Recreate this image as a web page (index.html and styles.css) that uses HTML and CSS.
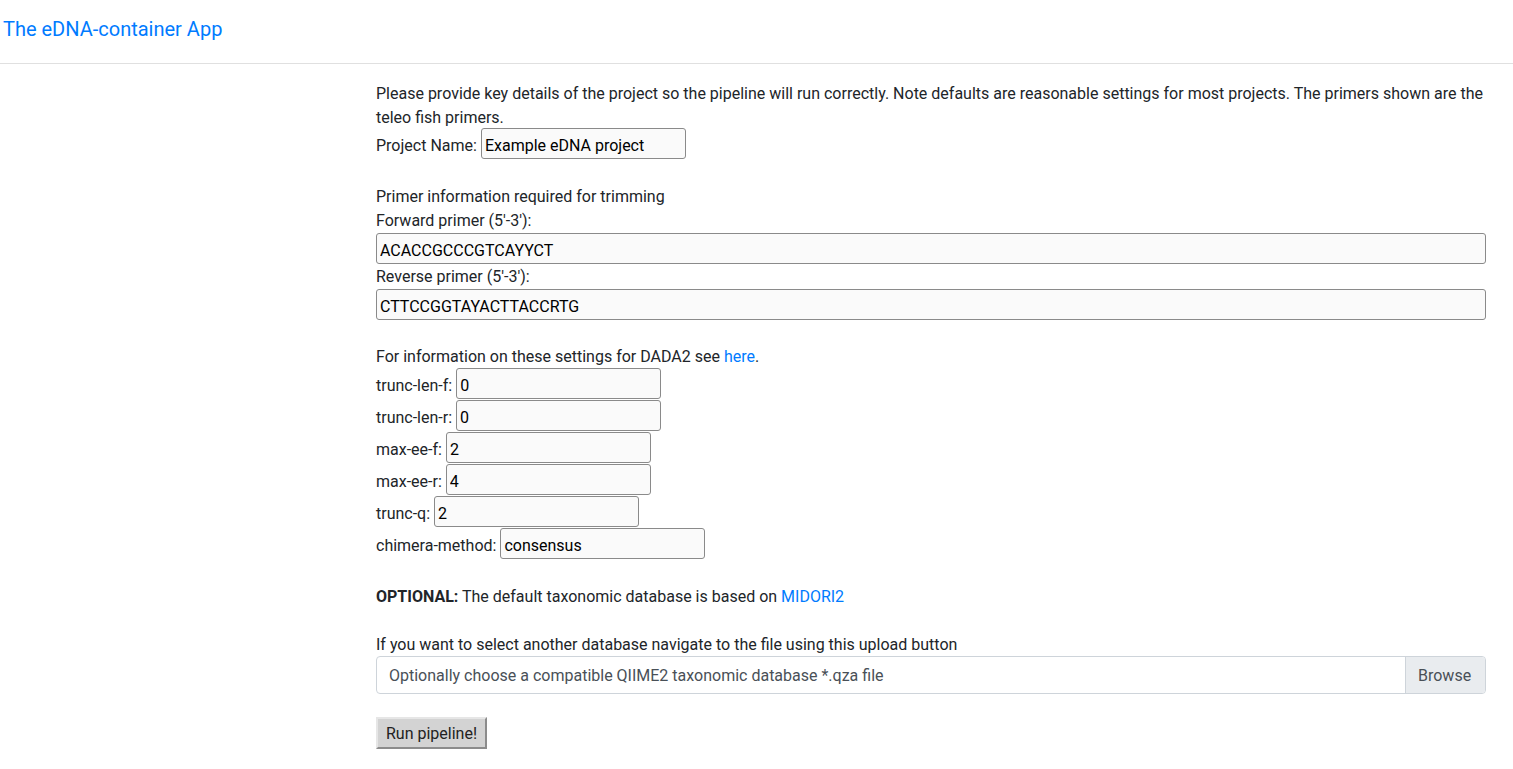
FILE: index.html
```html
<!DOCTYPE html>
<html lang="en">
<head>
<meta charset="utf-8">
<title>The eDNA-container App</title>
<link rel="stylesheet" href="styles.css">
</head>
<body>
<nav class="navbar"><a class="brand" href="#">The eDNA-container App</a></nav>
<main class="main">
  <p class="intro">Please provide key details of the project so the pipeline will run correctly. Note defaults are reasonable settings for most projects. The primers shown are the teleo fish primers.</p>
  <div class="row row-first"><label>Project Name:</label><input class="field" type="text" value="Example eDNA project"></div>

  <p class="section">Primer information required for trimming</p>
  <p class="line">Forward primer (5'-3'):</p>
  <input class="field wide" type="text" value="ACACCGCCCGTCAYYCT">
  <p class="line after-input">Reverse primer (5'-3'):</p>
  <input class="field wide" type="text" value="CTTCCGGTAYACTTACCRTG">

  <p class="section">For information on these settings for DADA2 see <a href="#">here</a>.</p>
  <div class="row row-next"><label>trunc-len-f:</label><input class="field" type="text" value="0"></div>
  <div class="row"><label>trunc-len-r:</label><input class="field" type="text" value="0"></div>
  <div class="row"><label>max-ee-f:</label><input class="field" type="text" value="2"></div>
  <div class="row"><label>max-ee-r:</label><input class="field" type="text" value="4"></div>
  <div class="row"><label>trunc-q:</label><input class="field" type="text" value="2"></div>
  <div class="row"><label>chimera-method:</label><input class="field" type="text" value="consensus"></div>

  <p class="section"><strong>OPTIONAL:</strong> The default taxonomic database is based on <a href="#">MIDORI2</a></p>
  <p class="section2">If you want to select another database navigate to the file using this upload button</p>
  <div class="custom-file">
    <span class="file-label">Optionally choose a compatible QIIME2 taxonomic database *.qza file</span>
    <span class="browse">Browse</span>
  </div>
  <button class="run" type="button">Run pipeline!</button>
</main>
</body>
</html>
```
FILE: styles.css
```css
* { box-sizing: border-box; }
html, body { margin: 0; padding: 0; }
body {
  font-family: Roboto, "Liberation Sans", sans-serif;
  font-size: 16px;
  line-height: 24px;
  color: #212529;
  background: #fff;
}
a { color: #007bff; text-decoration: none; }
.navbar {
  height: 64px;
  padding: 14px 3px 0;
  border-bottom: 1px solid #e0e0e0;
}
.brand {
  font-size: 20px;
  line-height: 30px;
  color: #007bff;
}
.main {
  padding: 18px 27px 0 376px;
}
p { margin: 0; }
.intro { margin: 0; }
.row {
  display: flex;
  align-items: baseline;
  height: 32px;
  gap: 4px;
}
.row-first { margin-top: -2px; }
.row-next { margin-top: -1px; }
.field {
  font-family: Roboto, "Liberation Sans", sans-serif;
  font-size: 16px;
  color: #000;
  width: 205px;
  height: 31px;
  padding: 4px 3px 0;
  border: 1px solid #8a8a8a;
  border-radius: 3px;
  background: #fafafa;
  outline: none;
}
.wide { display: block; width: 100%; padding-top: 3px; }
.section { margin-top: 25px; }
.section2 { margin-top: 24px; }
.after-input { margin-top: 1px; }
.custom-file {
  display: flex;
  height: 38px;
  margin-top: -1px;
  border: 1px solid #ced4da;
  border-radius: 4px;
  color: #495057;
  overflow: hidden;
}
.file-label {
  flex: 1;
  padding: 7px 12px 5px;
}
.browse {
  width: 80px;
  padding: 7px 12px 5px;
  background: #e9ecef;
  border-left: 1px solid #ced4da;
}
.run {
  display: block;
  margin-top: 23px;
  height: 32px;
  padding: 1px 8px 0;
  font-family: Roboto, "Liberation Sans", sans-serif;
  font-size: 16px;
  color: #222;
  background: #d3d3d3;
  border: 2px solid;
  border-color: #e6e6e6 #8c8c8c #8c8c8c #e6e6e6;
}
```
